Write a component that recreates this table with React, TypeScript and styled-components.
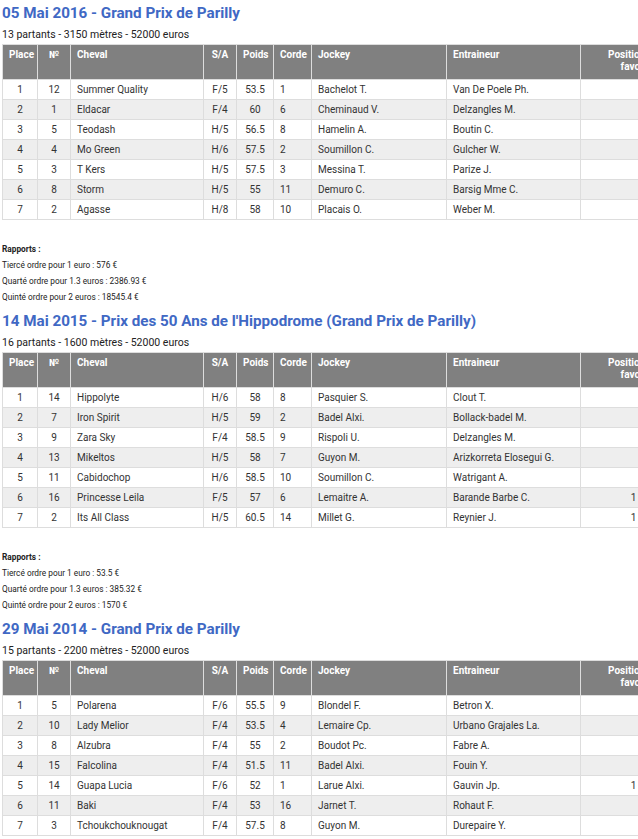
import styled, { createGlobalStyle } from "styled-components";

type Row = [string, string, string, string, string, string, string, string, string];

interface Race {
  title: string;
  info: string;
  rows: Row[];
  rapports: string[];
}

const races: Race[] = [
  {
    title: "05 Mai 2016 - Grand Prix de Parilly",
    info: "13 partants - 3150 mètres - 52000 euros",
    rows: [
      ["1", "12", "Summer Quality", "F/5", "53.5", "1", "Bachelot T.", "Van De Poele Ph.", ""],
      ["2", "1", "Eldacar", "F/4", "60", "6", "Cheminaud V.", "Delzangles M.", ""],
      ["3", "5", "Teodash", "H/5", "56.5", "8", "Hamelin A.", "Boutin C.", ""],
      ["4", "4", "Mo Green", "H/6", "57.5", "2", "Soumillon C.", "Gulcher W.", ""],
      ["5", "3", "T Kers", "H/5", "57.5", "3", "Messina T.", "Parize J.", ""],
      ["6", "8", "Storm", "H/5", "55", "11", "Demuro C.", "Barsig Mme C.", ""],
      ["7", "2", "Agasse", "H/8", "58", "10", "Placais O.", "Weber M.", ""],
    ],
    rapports: [
      "Tiercé ordre pour 1 euro : 576 €",
      "Quarté ordre pour 1.3 euros : 2386.93 €",
      "Quinté ordre pour 2 euros : 18545.4 €",
    ],
  },
  {
    title: "14 Mai 2015 - Prix des 50 Ans de l'Hippodrome (Grand Prix de Parilly)",
    info: "16 partants - 1600 mètres - 52000 euros",
    rows: [
      ["1", "14", "Hippolyte", "H/6", "58", "8", "Pasquier S.", "Clout T.", ""],
      ["2", "7", "Iron Spirit", "H/5", "59", "2", "Badel Alxi.", "Bollack-badel M.", ""],
      ["3", "9", "Zara Sky", "F/4", "58.5", "9", "Rispoli U.", "Delzangles M.", ""],
      ["4", "13", "Mikeltos", "H/5", "58", "7", "Guyon M.", "Arizkorreta Elosegui G.", ""],
      ["5", "11", "Cabidochop", "H/6", "58.5", "10", "Soumillon C.", "Watrigant A.", ""],
      ["6", "16", "Princesse Leila", "F/5", "57", "6", "Lemaitre A.", "Barande Barbe C.", "1"],
      ["7", "2", "Its All Class", "H/5", "60.5", "14", "Millet G.", "Reynier J.", "1"],
    ],
    rapports: [
      "Tiercé ordre pour 1 euro : 53.5 €",
      "Quarté ordre pour 1.3 euros : 385.32 €",
      "Quinté ordre pour 2 euros : 1570 €",
    ],
  },
  {
    title: "29 Mai 2014 - Grand Prix de Parilly",
    info: "15 partants - 2200 mètres - 52000 euros",
    rows: [
      ["1", "5", "Polarena", "F/6", "55.5", "9", "Blondel F.", "Betron X.", ""],
      ["2", "10", "Lady Melior", "F/4", "53.5", "4", "Lemaire Cp.", "Urbano Grajales La.", ""],
      ["3", "8", "Alzubra", "F/4", "55", "2", "Boudot Pc.", "Fabre A.", ""],
      ["4", "15", "Falcolina", "F/4", "51.5", "11", "Badel Alxi.", "Fouin Y.", ""],
      ["5", "14", "Guapa Lucia", "F/6", "52", "1", "Larue Alxi.", "Gauvin Jp.", "1"],
      ["6", "11", "Baki", "F/4", "53", "16", "Jarnet T.", "Rohaut F.", ""],
      ["7", "3", "Tchoukchouknougat", "F/4", "57.5", "8", "Guyon M.", "Durepaire Y.", ""],
    ],
    rapports: [],
  },
];

const columns: { label: React.ReactNode; width: number; align: "left" | "center" }[] = [
  { label: "Place", width: 35, align: "center" },
  { label: "№", width: 33, align: "center" },
  { label: "Cheval", width: 133, align: "left" },
  { label: "S/A", width: 33, align: "center" },
  { label: "Poids", width: 37, align: "center" },
  { label: "Corde", width: 38, align: "left" },
  { label: "Jockey", width: 135, align: "left" },
  { label: "Entraineur", width: 134, align: "left" },
  {
    label: (
      <>
        Position du
        <br />
        favori
      </>
    ),
    width: 106,
    align: "center",
  },
];

const App = () => {
  return (
    <Page>
      <GlobalStyle />
      {races.map((race) => (
        <Section key={race.title}>
          <RaceTitle>{race.title}</RaceTitle>
          <RaceInfo>{race.info}</RaceInfo>
          <ResultTable>
            <colgroup>
              {columns.map((c, i) => (
                <col key={i} style={{ width: c.width }} />
              ))}
            </colgroup>
            <thead>
              <tr>
                {columns.map((c, i) => (
                  <HeadCell key={i} $align={i === 5 ? "center" : c.align}>
                    {c.label}
                  </HeadCell>
                ))}
              </tr>
            </thead>
            <tbody>
              {race.rows.map((row, r) => (
                <BodyRow key={r} $striped={r % 2 === 1}>
                  {row.map((v, i) => (
                    <Cell key={i} $align={columns[i].align}>
                      {v}
                    </Cell>
                  ))}
                </BodyRow>
              ))}
            </tbody>
          </ResultTable>
          {race.rapports.length > 0 && (
            <Rapports>
              <RapportsTitle>Rapports :</RapportsTitle>
              {race.rapports.map((line) => (
                <RapportLine key={line}>{line}</RapportLine>
              ))}
            </Rapports>
          )}
        </Section>
      ))}
    </Page>
  );
};

export default App;

// ─── Styled Components ───────────────────────────────────────
const GlobalStyle = createGlobalStyle`
  html, body {
    margin: 0;
    padding: 0;
    background: #ffffff;
    overflow-x: hidden;
  }
  body {
    font-family: Roboto, "Liberation Sans", Arial, sans-serif;
    color: #333333;
  }
`;

const Page = styled.div`
  padding: 0 2px;
  width: 700px;
`;

const Section = styled.section`
  padding-top: 4px;
  padding-bottom: 3px;
`;

const RaceTitle = styled.h2`
  margin: 0;
  font-size: 15.2px;
  line-height: 18px;
  font-weight: 700;
  color: #4068c4;
  white-space: nowrap;
`;

const RaceInfo = styled.div`
  margin-top: 6px;
  margin-bottom: 2px;
  font-size: 10.5px;
  line-height: 14px;
  color: #222222;
`;

const ResultTable = styled.table`
  border-collapse: collapse;
  table-layout: fixed;
  width: 684px;
  font-size: 10px;
`;

const HeadCell = styled.th<{ $align: "left" | "center" }>`
  background: #808080;
  color: #ffffff;
  font-weight: 700;
  font-size: 10px;
  line-height: 12px;
  text-align: ${({ $align }) => $align};
  vertical-align: top;
  padding: 4px 6px 6px;
  border: 1px solid #dddddd;
  height: 24px;
`;

const BodyRow = styled.tr<{ $striped: boolean }>`
  background: ${({ $striped }) => ($striped ? "#eeeeee" : "#ffffff")};
`;

const Cell = styled.td<{ $align: "left" | "center" }>`
  height: 19px;
  padding: 0 6px;
  border: 1px solid #dddddd;
  text-align: ${({ $align }) => $align};
  vertical-align: middle;
  color: #333333;
  white-space: nowrap;
  overflow: hidden;
`;

const Rapports = styled.div`
  margin-top: 21px;
`;

const RapportsTitle = styled.div`
  font-size: 8.3px;
  line-height: 16px;
  font-weight: 700;
  color: #222222;
`;

const RapportLine = styled.div`
  font-size: 8.3px;
  line-height: 16px;
  color: #222222;
`;
